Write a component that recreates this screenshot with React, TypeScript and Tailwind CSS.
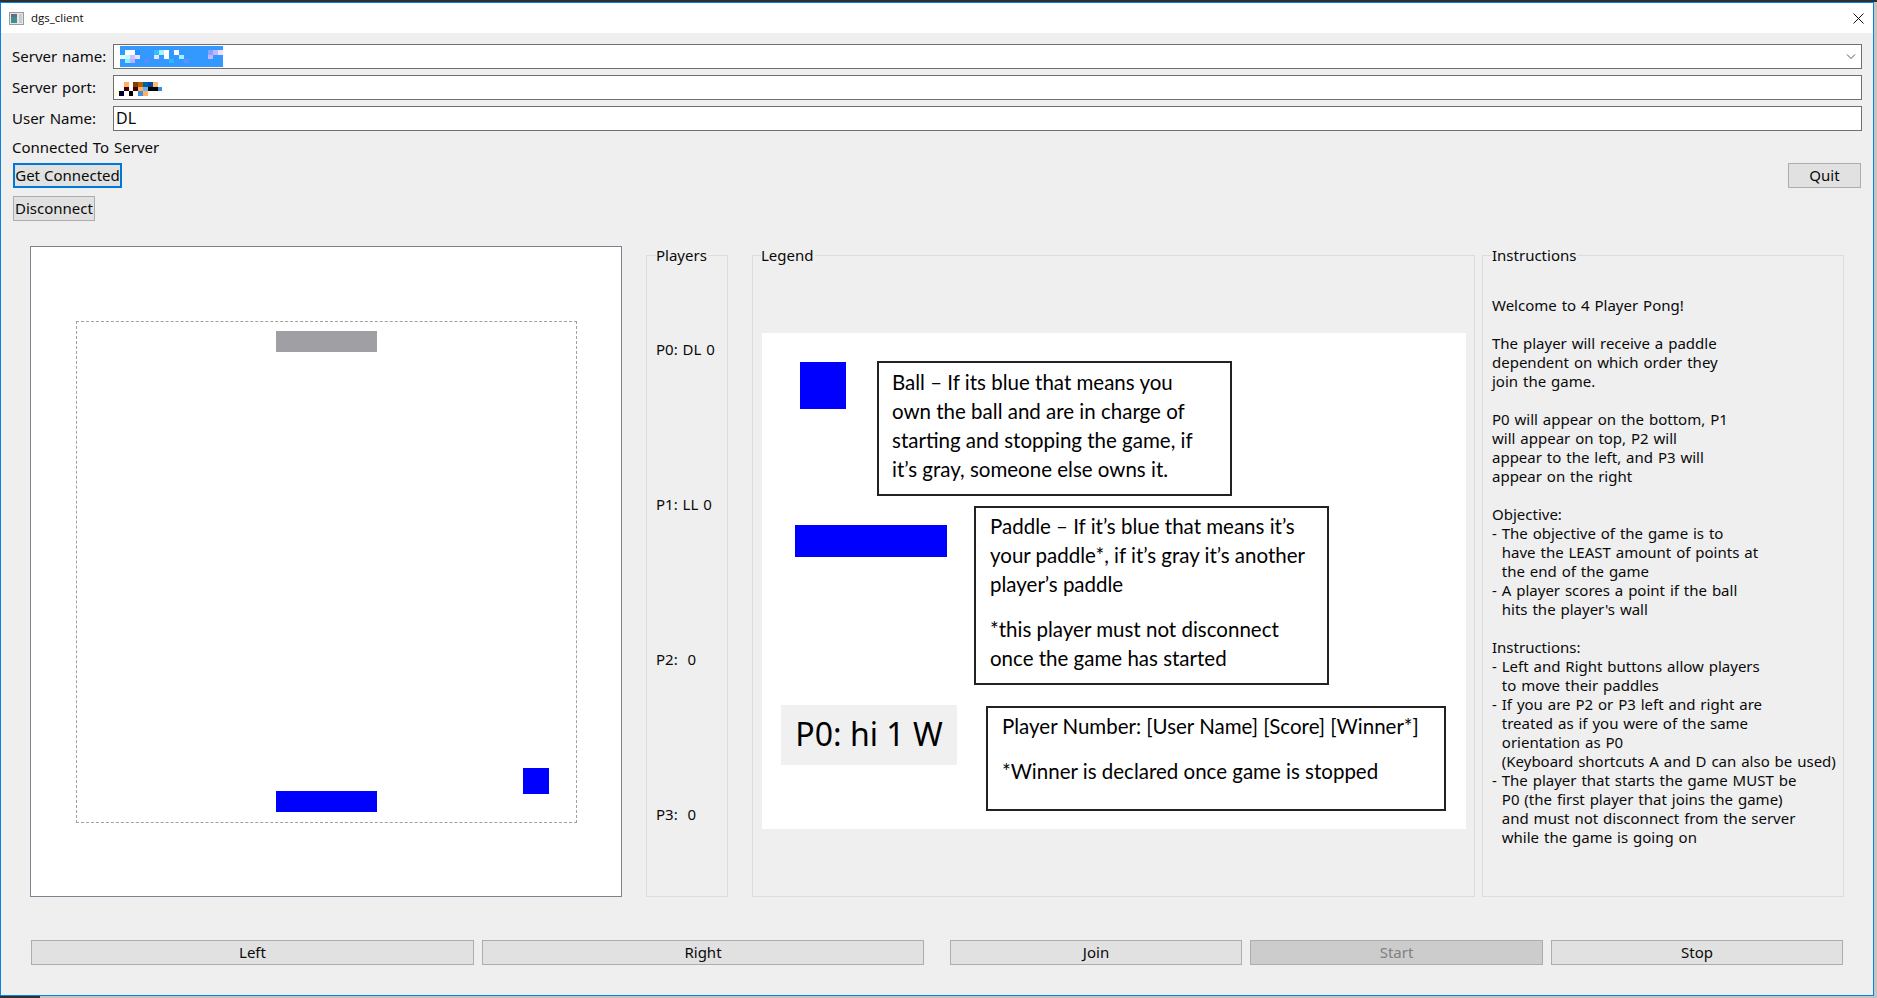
import type { ReactNode } from 'react';

// mosaic cells, [x, y, w, h, colour], same units as the viewBox
const serverCells: [number, number, number, number, string][] = [
  [15, 12, 30, 14, '#ffffff'],
  [45, 12, 15, 14, '#2090ff'],
  [102, 12, 15, 14, '#30c0ff'],
  [117, 12, 15, 14, '#a8f0ff'],
  [132, 12, 15, 14, '#ffffff'],
  [162, 12, 15, 14, '#ffffff'],
  [264, 12, 15, 14, '#8f9fff'],
  [279, 12, 15, 14, '#c0b8ff'],
  [294, 12, 15, 14, '#f0e0ff'],
  [0, 26, 15, 13, '#e0ffff'],
  [15, 26, 15, 13, '#c0ffff'],
  [30, 26, 15, 13, '#c8c0ff'],
  [45, 26, 15, 13, '#e8e0ff'],
  [102, 26, 15, 13, '#f0e0ff'],
  [132, 26, 15, 13, '#ffffff'],
  [177, 26, 15, 13, '#a0f0ff'],
  [264, 26, 15, 13, '#c0b8ff'],
  [15, 39, 15, 13, '#90f0ff'],
  [30, 39, 15, 13, '#c0b0ff'],
  [72, 39, 15, 13, '#5a8cff'],
  [147, 39, 15, 13, '#30b8ff'],
  [192, 39, 15, 13, '#6090ff'],
];

const portCells: [number, number, number, number, string][] = [
  [30, 0, 15, 14, '#ffb060'],
  [57, 0, 15, 14, '#8b3a00'],
  [72, 0, 15, 14, '#b86000'],
  [87, 0, 15, 14, '#0060a8'],
  [102, 0, 15, 14, '#004a9c'],
  [117, 0, 15, 14, '#ffb870'],
  [30, 14, 15, 13, '#400000'],
  [57, 14, 15, 13, '#400000'],
  [72, 14, 15, 13, '#ffb060'],
  [87, 14, 15, 13, '#70b0f0'],
  [102, 14, 30, 13, '#000000'],
  [132, 14, 12, 13, '#3a90e0'],
  [0, 27, 15, 14, '#ffffe0'],
  [15, 27, 15, 14, '#000030'],
  [45, 27, 12, 14, '#000000'],
  [72, 27, 15, 14, '#4090e0'],
  [87, 27, 15, 14, '#ffb060'],
];

const instructions = `Welcome to 4 Player Pong!

The player will receive a paddle
dependent on which order they
join the game.

P0 will appear on the bottom, P1
will appear on top, P2 will
appear to the left, and P3 will
appear on the right

Objective:
- The objective of the game is to
  have the LEAST amount of points at
  the end of the game
- A player scores a point if the ball
  hits the player's wall

Instructions:
- Left and Right buttons allow players
  to move their paddles
- If you are P2 or P3 left and right are
  treated as if you were of the same
  orientation as P0
  (Keyboard shortcuts A and D can also be used)
- The player that starts the game MUST be
  P0 (the first player that joins the game)
  and must not disconnect from the server
  while the game is going on`;

function Mosaic({ cells, w, h, vw, vh, className }: { cells: typeof serverCells; w: number; h: number; vw: number; vh: number; className?: string }) {
  return (
    <svg width={w} height={h} viewBox={`0 0 ${vw} ${vh}`} className={className} shapeRendering="crispEdges">
      {cells.map(([x, y, cw, ch, fill], i) => (
        <rect key={i} x={x} y={y} width={cw} height={ch} fill={fill} />
      ))}
    </svg>
  );
}

function Field({ label, children }: { label: string; children: ReactNode }) {
  return (
    <div className="flex h-[25px] items-center">
      <div className="w-[101px] shrink-0 pb-[2px]">{label}</div>
      <div className="flex h-[25px] flex-1 items-center border border-[#707070] bg-white">{children}</div>
    </div>
  );
}

function Group({ title, left, className, children }: { title: string; left: string; className: string; children?: ReactNode }) {
  return (
    <div className={`relative mt-[9px] border border-[#dcdcdc] ${className}`}>
      <div className={`absolute -top-[11px] bg-[#efefef] pr-[1px] ${left}`}>{title}</div>
      {children}
    </div>
  );
}

function BottomButton({ label, className, disabled }: { label: string; className: string; disabled?: boolean }) {
  return (
    <button
      className={`h-[25px] border border-[#adadad] pb-[2px] ${disabled ? 'bg-[#cccccc] text-[#808080]' : 'bg-[#e1e1e1]'} ${className}`}
    >
      {label}
    </button>
  );
}

export default function App() {
  return (
    <div className="flex h-[998px] w-[1877px] flex-col overflow-hidden bg-[#c4c4c4] font-['Noto_Sans',sans-serif] text-[15px] leading-[20px] text-[#0a0a0a] [word-spacing:1px]">
      <div className="h-[2px] shrink-0 bg-[#2b2f36]" />
      <div className="flex h-[994px] w-[1874px] shrink-0 flex-col border border-[#0f7fd9] bg-[#efefef]">
        {/* title bar */}
        <div className="flex h-[30px] shrink-0 items-center bg-white pl-[8px] pr-[8px]">
          <svg width="15" height="13" viewBox="0 0 15 13">
            <rect x="0.5" y="0.5" width="14" height="12" fill="#e6e6e6" stroke="#9a9a9a" />
            <rect x="2" y="2" width="6" height="9" fill="#3f8f8a" />
            <rect x="2" y="2" width="6" height="3" fill="#5c6f8c" />
            <rect x="10" y="2" width="3" height="9" fill="#c6ccd0" />
          </svg>
          <div className="ml-[7px] font-['Open_Sans',sans-serif] text-[11.5px]">dgs_client</div>
          <svg width="11" height="11" viewBox="0 0 11 11" className="ml-auto mr-[1px]" stroke="#111" fill="none">
            <path d="M0.5 0.5L10.5 10.5M10.5 0.5L0.5 10.5" />
          </svg>
        </div>

        {/* connection form */}
        <div className="flex flex-col gap-[6px] pl-[11px] pr-[11px] pt-[11px]">
          <Field label="Server name:">
            <Mosaic cells={serverCells} w={103} h={21} vw={309} vh={63} className="ml-[6px] bg-[#3399ff]" />
            <svg width="10" height="6" viewBox="0 0 10 6" className="ml-auto mr-[5px]" fill="none" stroke="#555">
              <path d="M1 0.5L5 4.5L9 0.5" />
            </svg>
          </Field>
          <Field label="Server port:">
            <Mosaic cells={portCells} w={48} h={14} vw={144} vh={41} className="mt-[2px]" />
          </Field>
          <Field label="User Name:">
            <span className="pb-[2px] pl-[2px] text-[16px]">DL</span>
          </Field>
        </div>
        <div className="mt-[6px] pl-[11px]">Connected To Server</div>
        <div className="mt-[6px] flex justify-between pl-[12px] pr-[12px]">
          <button className="h-[25px] w-[109px] border-2 border-[#0078d7] bg-[#e1e1e1] pb-[2px]">Get Connected</button>
          <button className="h-[25px] w-[73px] border border-[#adadad] bg-[#e1e1e1] pb-[2px]">Quit</button>
        </div>
        <div className="mt-[8px] pl-[12px]">
          <button className="h-[25px] w-[82px] border border-[#adadad] bg-[#e1e1e1] pb-[2px]">Disconnect</button>
        </div>

        {/* main area */}
        <div className="mt-[25px] flex h-[651px] pl-[29px] pr-[29px]">
          <div className="relative h-full w-[592px] shrink-0 border border-[#7d828c] bg-white">
            <div className="absolute left-[45px] top-[74px] h-[502px] w-[501px] border border-dashed border-[#a0a0a0]" />
            <div className="absolute left-[245px] top-[84px] h-[21px] w-[101px] bg-[#a0a0a4]" />
            <div className="absolute left-[245px] top-[544px] h-[21px] w-[101px] bg-[#0000ff]" />
            <div className="absolute left-[492px] top-[521px] h-[26px] w-[26px] bg-[#0000ff]" />
          </div>

          <Group title="Players" left="left-[9px]" className="ml-[24px] h-[642px] w-[82px] shrink-0">
            <div className="flex flex-col gap-[135px] pl-[9px] pt-[83px]">
              <div>P0: DL 0</div>
              <div>P1: LL 0</div>
              <div>P2:&nbsp; 0</div>
              <div>P3:&nbsp; 0</div>
            </div>
          </Group>

          <Group title="Legend" left="left-[8px]" className="ml-[24px] h-[642px] w-[723px] shrink-0">
            <div className="ml-[9px] mt-[77px] h-[496px] w-[704px] bg-white font-['Lato',sans-serif] text-[20.5px] leading-[29px] text-black [word-spacing:0px]">
              <div className="flex items-start pt-[28px]">
                <div className="ml-[38px] mt-[1px] h-[47px] w-[46px] bg-[#0000ff]" />
                <div className="ml-[31px] h-[135px] w-[355px] border-2 border-[#222] px-[13px] pt-[5px]">
                  Ball – If its blue that means you
                  <br />
                  own the ball and are in charge of
                  <br />
                  starting and stopping the game, if
                  <br />
                  it’s gray, someone else owns it.
                </div>
              </div>
              <div className="mt-[10px] flex items-start">
                <div className="ml-[33px] mt-[19px] h-[32px] w-[152px] bg-[#0000ff]" />
                <div className="ml-[27px] h-[179px] w-[355px] border-2 border-[#222] px-[14px] pt-[4px]">
                  <p>
                    Paddle – If it’s blue that means it’s
                    <br />
                    your paddle*, if it’s gray it’s another
                    <br />
                    player’s paddle
                  </p>
                  <p className="mt-[16px]">
                    *this player must not disconnect
                    <br />
                    once the game has started
                  </p>
                </div>
              </div>
              <div className="mt-[20px] flex items-start">
                <div className="ml-[19px] flex h-[60px] w-[176px] items-center justify-center bg-[#f0f0f0] pb-[4px] font-['Noto_Sans',sans-serif] text-[32px]">
                  P0: hi 1 W
                </div>
                <div className="ml-[29px] mt-[1px] h-[105px] w-[460px] border-2 border-[#222] px-[14px] pt-[4px]">
                  <p>Player Number: [User Name] [Score] [Winner*]</p>
                  <p className="mt-[16px]">*Winner is declared once game is stopped</p>
                </div>
              </div>
            </div>
          </Group>

          <Group title="Instructions" left="left-[9px]" className="ml-[7px] h-[642px] w-[362px] shrink-0">
            <div className="whitespace-pre pl-[9px] pt-[40px] leading-[19px]">{instructions}</div>
          </Group>
        </div>

        {/* game controls */}
        <div className="mt-[43px] flex pl-[30px]">
          <BottomButton label="Left" className="w-[443px]" />
          <BottomButton label="Right" className="ml-[8px] w-[442px]" />
          <BottomButton label="Join" className="ml-[26px] w-[292px]" />
          <BottomButton label="Start" className="ml-[8px] w-[293px]" disabled />
          <BottomButton label="Stop" className="ml-[8px] w-[292px]" />
        </div>
      </div>
      <div className="flex h-[2px] shrink-0">
        <div className="w-[40px] bg-[#2b2f36]" />
      </div>
    </div>
  );
}
